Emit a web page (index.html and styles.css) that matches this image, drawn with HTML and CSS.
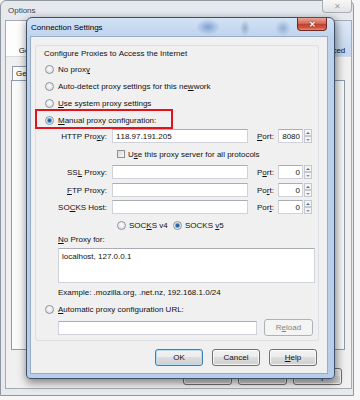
FILE: index.html
```html
<!DOCTYPE html>
<html lang="en">
<head>
  <meta charset="UTF-8">
  <title>Connection Settings</title>
  <link rel="stylesheet" href="styles.css">
</head>
<body>
<div class="screen">

  <div class="options">
    <div class="win-title">
      <span>Options</span>
      <span class="win-close">✕</span>
    </div>
    <div class="win-body">
      <div class="panes">
        <div class="pane">General</div>
        <div class="pane active">Advanced</div>
      </div>
      <div class="tabs">
        <span class="tab">General</span>
        <span class="tab">Network</span>
      </div>
      <div class="tabpanel"></div>
      <div class="win-buttons">
        <span class="btn">OK</span>
        <span class="btn">Cancel</span>
        <span class="btn">Help</span>
      </div>
    </div>
  </div>

  <div class="dialog">
    <div class="dlg-title">
      <span>Connection Settings</span>
      <span class="dlg-close">✕</span>
    </div>
    <div class="client">
      <div class="group">
        <div class="caption">Configure Proxies to Access the Internet</div>

        <div class="opt"><span class="radio"></span><span>No prox<u>y</u></span></div>
        <div class="opt"><span class="radio"></span><span>Auto-detect proxy settings for this ne<u>w</u>work</span></div>
        <div class="opt"><span class="radio"></span><span><u>U</u>se system proxy settings</span></div>
        <div class="opt"><span class="radio on"></span><span><u>M</u>anual proxy configuration:</span></div>

        <div class="proxy-row">
          <span class="plabel">HTTP Pro<u>x</u>y:</span>
          <span class="field host">118.97.191.205</span>
          <span class="port-label"><u>P</u>ort:</span>
          <span class="field port">8080</span>
          <span class="spin"><span class="up"></span><span class="down"></span></span>
        </div>

        <div class="check-row"><span class="check"></span><span>U<u>s</u>e this proxy server for all protocols</span></div>

        <div class="proxy-row">
          <span class="plabel">SS<u>L</u> Proxy:</span>
          <span class="field host"></span>
          <span class="port-label">P<u>o</u>rt:</span>
          <span class="field port">0</span>
          <span class="spin"><span class="up"></span><span class="down"></span></span>
        </div>
        <div class="proxy-row ftp">
          <span class="plabel"><u>F</u>TP Proxy:</span>
          <span class="field host"></span>
          <span class="port-label">Po<u>r</u>t:</span>
          <span class="field port">0</span>
          <span class="spin"><span class="up"></span><span class="down"></span></span>
        </div>
        <div class="proxy-row socks-host">
          <span class="plabel">SO<u>C</u>KS Host:</span>
          <span class="field host"></span>
          <span class="port-label">Por<u>t</u>:</span>
          <span class="field port">0</span>
          <span class="spin"><span class="up"></span><span class="down"></span></span>
        </div>

        <div class="socks">
          <span class="socks-opt first"><span class="radio"></span><span>SOC<u>K</u>S v4</span></span>
          <span class="socks-opt"><span class="radio on"></span><span>SOCKS <u>v</u>5</span></span>
        </div>

        <div class="noproxy-label"><u>N</u>o Proxy for:</div>
        <div class="area">localhost, 127.0.0.1</div>
        <div class="example">Example: .mozilla.org, .net.nz, 192.168.1.0/24</div>

        <div class="opt auto"><span class="radio"></span><span><u>A</u>utomatic proxy configuration URL:</span></div>
        <div class="url-row">
          <span class="field url"></span>
          <span class="btn disabled"><span>R<u>e</u>load</span></span>
        </div>

        <div class="highlight"></div>
      </div>

      <div class="dlg-buttons">
        <span class="btn default">OK</span>
        <span class="btn">Cancel</span>
        <span class="btn"><span><u>H</u>elp</span></span>
      </div>
    </div>
  </div>

</div>
</body>
</html>
```

FILE: styles.css
```css
* { box-sizing: border-box; }
body {
  margin: 0;
  background: #f6f6f6;
  font-family: "Liberation Sans", Arial, sans-serif;
  font-size: 8px;
  font-kerning: none;
  color: #111;
}
u { text-decoration-thickness: 1px; text-underline-offset: 1px; }
.screen {
  position: relative;
  width: 360px;
  height: 400px;
  overflow: hidden;
}

/* background Options window */
.options {
  width: 354px;
  height: 396px;
  border: 1px solid #8f969e;
  border-radius: 6px 6px 0 0;
  background: #e6eaef;
  padding: 0 1px 6px 4px;
  display: flex;
  flex-direction: column;
}
.win-title {
  height: 19px;
  display: flex;
  align-items: center;
  padding-left: 3px;
  color: #404040;
}
.win-close {
  margin-left: auto;
  align-self: flex-start;
  margin-top: -1px;
  width: 30px;
  height: 13px;
  border: 1px solid #a7aeb6;
  border-top: 0;
  border-radius: 0 0 4px 4px;
  background: linear-gradient(#f7f7f7, #e1e3e6);
  color: #a3a3a3;
  display: flex;
  align-items: center;
  justify-content: center;
}
.win-body {
  flex: 1;
  border: 1px solid #a4abb3;
  background: #f0f0f0;
  display: flex;
  flex-direction: column;
}
.panes {
  height: 36px;
  background: #fdfdfd;
  border-bottom: 1px solid #d5dbe3;
  display: flex;
}
.pane {
  width: 54px;
  display: flex;
  align-items: flex-end;
  justify-content: center;
  padding-bottom: 1px;
}
.pane.active {
  width: 48px;
  margin-left: auto;
  background: linear-gradient(#dce8f7, #c3d6ee);
  border-left: 1px solid #a9c0dd;
}
.tabs {
  display: flex;
  height: 14px;
  margin: 9px 0 0 6px;
}
.tab {
  padding: 0 3px;
  border: 1px solid #8e9bab;
  border-bottom: 0;
  background: #fbfbfb;
  display: flex;
  align-items: center;
}
.tabpanel {
  height: 270px;
  margin: 0 6px 0 5px;
  border: 1px solid #8e9bab;
  background: #fafafa;
}
.win-buttons {
  display: flex;
  justify-content: flex-end;
  gap: 6px;
  margin-top: 18px;
  padding-right: 9px;
}
.win-buttons .btn { width: 49px; }

/* Connection Settings dialog */
.dialog {
  position: absolute;
  left: 26px;
  top: 17px;
  width: 309px;
  height: 362px;
  border: 1px solid #3f5068;
  border-radius: 6px 6px 4px 4px;
  padding: 0 7px 5px 4px;
  background:
    radial-gradient(12px 8px at 181px 9px, rgba(40, 90, 170, .45), rgba(40, 90, 170, 0)),
    radial-gradient(5px 8px at 218px 10px, rgba(90, 120, 160, .45), rgba(90, 120, 160, 0)),
    radial-gradient(8px 8px at 256px 10px, rgba(70, 110, 170, .4), rgba(70, 110, 170, 0)),
    linear-gradient(#d3e2f4, #bdd2ec 20px, #b7cde9);
  box-shadow: 1px 3px 8px 1px rgba(0, 0, 0, .45);
}
.dlg-title {
  height: 19px;
  display: flex;
  align-items: center;
  color: #000;
}
.dlg-close {
  margin-left: auto;
  align-self: flex-start;
  width: 30px;
  height: 13px;
  border: 1px solid #6e2a22;
  border-top: 0;
  border-radius: 0 0 4px 4px;
  background: linear-gradient(#e9a696 0%, #d2695a 45%, #c23f2e 52%, #cf5640 80%, #e58d70 100%);
  color: #fff;
  font-weight: bold;
  text-shadow: 0 0 2px #5a1a12;
  display: flex;
  align-items: center;
  justify-content: center;
}
.client {
  height: 336px;
  background: #f0f0f0;
  box-shadow: 0 0 0 1px #98acc6;
  padding: 8px 0 0 4px;
}
.group {
  position: relative;
  width: 284px;
  height: 296px;
  border-radius: 3px;
  box-shadow: inset 0 0 0 1px #dcdfe4;
}
.caption {
  height: 16px;
  display: flex;
  align-items: center;
  padding-left: 9px;
}
.opt {
  height: 17px;
  display: flex;
  align-items: center;
  padding-left: 10px;
}
.opt.auto { height: 16px; }
.radio {
  flex: none;
  width: 9px;
  height: 9px;
  margin-right: 4px;
  border-radius: 50%;
  border: 1px solid #8a949e;
  background: radial-gradient(circle at 50% 40%, #fdfdfd, #d9d9d9);
}
.radio.on {
  background: radial-gradient(circle, #1b4f8a 0, #2f6db0 1.4px, #9cc3e8 2.4px, #eef3f8 3.2px, #dcdcdc 4px);
}
.check {
  flex: none;
  width: 8px;
  height: 8px;
  margin-right: 3px;
  border: 1px solid #8f8f8f;
  background: linear-gradient(135deg, #d8d8d8, #fafafa);
}
.proxy-row {
  height: 14px;
  display: flex;
  align-items: center;
}
.proxy-row.ftp { margin-top: 4px; }
.proxy-row.socks-host { margin-top: 3px; }
.plabel { width: 72px; text-align: right; }
.field {
  height: 14px;
  background: #fff;
  border: 1px solid #cfd3d9;
  border-top-color: #abadb3;
  display: flex;
  align-items: center;
  padding: 0 3px;
}
.field.host { width: 136px; margin-left: 5px; }
.port-label { width: 21px; margin-left: 9px; }
.field.port {
  width: 25px;
  justify-content: flex-end;
  padding-right: 2px;
}
.spin {
  width: 8px;
  height: 14px;
  margin-left: 1px;
  display: flex;
  flex-direction: column;
}
.spin span {
  flex: 1;
  border: 1px solid #c4c9cf;
  background: #f4f4f4;
  display: flex;
  align-items: center;
  justify-content: center;
}
.spin .up::after {
  content: "";
  border-left: 2px solid transparent;
  border-right: 2px solid transparent;
  border-bottom: 2px solid #4d6e9e;
}
.spin .down::after {
  content: "";
  border-left: 2px solid transparent;
  border-right: 2px solid transparent;
  border-top: 2px solid #8a97a8;
}
.check-row {
  height: 22px;
  display: flex;
  align-items: center;
  padding-left: 82px;
}
.socks {
  height: 22px;
  display: flex;
  align-items: center;
  padding-left: 82px;
}
.socks-opt { display: flex; align-items: center; }
.socks-opt.first { width: 56px; }
.socks-opt .radio { margin-right: 3px; }
.noproxy-label {
  height: 8px;
  line-height: 8px;
  padding-left: 23px;
}
.area {
  width: 257px;
  height: 35px;
  margin: 4px 0 0 23px;
  padding: 3px 3px;
  line-height: 10px;
  background: #fff;
  border: 1px solid #cfd3d9;
  border-top-color: #abadb3;
}
.example {
  height: 18px;
  display: flex;
  align-items: center;
  padding-left: 23px;
}
.url-row {
  height: 17px;
  margin-top: 2px;
  display: flex;
  align-items: center;
  padding-left: 23px;
}
.field.url { width: 199px; }
.url-row .btn { margin-left: 7px; width: 49px; }
.highlight {
  position: absolute;
  left: 0;
  top: 64px;
  width: 138px;
  height: 20px;
  border: 2px solid #e3131b;
}

/* buttons */
.btn {
  width: 48px;
  height: 17px;
  display: flex;
  align-items: center;
  justify-content: center;
  border: 1px solid #707070;
  border-radius: 3px;
  background: linear-gradient(#f2f2f2 0%, #ebebeb 49%, #dddddd 50%, #cfcfcf 100%);
  box-shadow: inset 0 0 0 1px rgba(255, 255, 255, .75);
}
.btn.default {
  border-color: #3c7fb1;
  box-shadow: inset 0 0 0 1px #b8dcf3;
}
.btn.disabled {
  border-color: #adb2b5;
  background: #f4f4f4;
  color: #838383;
  box-shadow: none;
}
.dlg-buttons {
  display: flex;
  justify-content: flex-end;
  gap: 9px;
  margin-top: 8px;
  padding-right: 10px;
}
```
